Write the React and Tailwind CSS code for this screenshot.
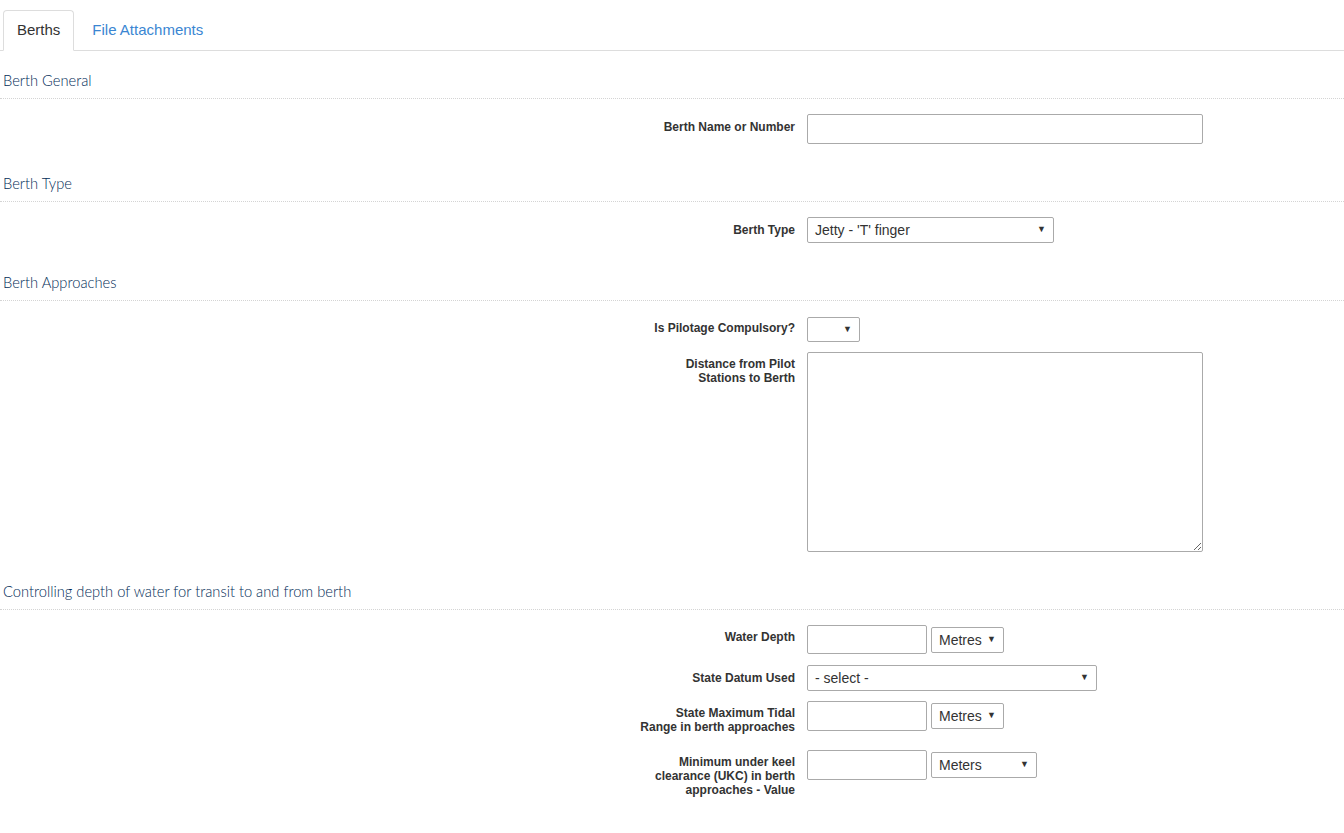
import React from 'react';

const labelCls = "w-[795px] shrink-0 text-right text-[12px] leading-[14px] font-bold text-[#333]";

const Heading = ({ children, first }) => (
  <div className={`${first ? 'mt-[19px]' : 'mt-[29px]'} mb-[15px] pl-[3px] pb-[8px] border-b border-dotted border-[#d4d4d4] text-[14.7px] leading-[20px] font-light text-[#022c57] font-['Lato',sans-serif]`}>
    {children}
  </div>
);

const Row = ({ label, pt = 6, mb = 10, children }) => (
  <div className="flex gap-[12px]" style={{ marginBottom: mb }}>
    <div className={labelCls} style={{ paddingTop: pt, paddingBottom: 5 }}>
      {label}
    </div>
    <div className="flex items-start gap-[4px]">{children}</div>
  </div>
);

const Input = ({ w = 'w-[396px]', h = 'h-[30px]' }) => (
  <input type="text" className={`${w} ${h} border border-[#aaa] rounded-[2px] bg-white outline-none`} />
);

const Select = ({ value, w, h = 'h-[26px]', mt = 'mt-0' }) => (
  <div className={`${w} ${h} ${mt} flex items-center justify-between border border-[#aaa] rounded-[2px] bg-white pl-[7px] pr-[7px] text-[14px] text-[#333]`}>
    <span>{value}</span>
    <span className="text-[9px] text-[#333]">▼</span>
  </div>
);

export default function App() {
  return (
    <div className="min-h-screen bg-white font-['Liberation_Sans',Arial,sans-serif]">
      {/* tabs */}
      <div className="pt-[10px] flex border-b border-[#ddd] text-[15px]">
        <div className="ml-[3px] -mb-px h-[41px] px-[13px] flex items-center border border-[#ddd] border-b-white rounded-t-[4px] bg-white text-[#333]">
          Berths
        </div>
        <div className="ml-[3px] h-[40px] px-[15px] flex items-center text-[#3a86d2]">
          File Attachments
        </div>
      </div>

      <Heading first>Berth General</Heading>
      <Row label="Berth Name or Number" mb={0}>
        <Input />
      </Row>

      <Heading>Berth Type</Heading>
      <Row label="Berth Type" mb={0}>
        <Select value="Jetty - 'T' finger" w="w-[247px]" />
      </Row>

      <Heading>Berth Approaches</Heading>
      <div className="pt-px" />
      <Row label="Is Pilotage Compulsory?" pt={4}>
        <Select value="" w="w-[53px]" h="h-[25px]" />
      </Row>
      <Row label={<>Distance from Pilot<br />Stations to Berth</>} pt={5} mb={0}>
        <textarea className="w-[396px] h-[200px] border border-[#aaa] rounded-[2px] bg-white outline-none block" />
      </Row>

      <Heading>Controlling depth of water for transit to and from berth</Heading>
      <Row label="Water Depth" pt={5} mb={11}>
        <Input w="w-[120px]" h="h-[29px]" />
        <Select value="Metres" w="w-[73px]" mt="mt-[2px]" />
      </Row>
      <Row label="State Datum Used" pt={6}>
        <Select value="- select -" w="w-[290px]" />
      </Row>
      <Row label={<>State Maximum Tidal<br />Range in berth approaches</>} pt={5} mb={11}>
        <Input w="w-[120px]" />
        <Select value="Metres" w="w-[73px]" mt="mt-[2px]" />
      </Row>
      <Row label={<>Minimum under keel<br />clearance (UKC) in berth<br />approaches - Value</>} pt={5}>
        <Input w="w-[120px]" />
        <Select value="Meters" w="w-[106px]" mt="mt-[2px]" />
      </Row>
    </div>
  );
}
